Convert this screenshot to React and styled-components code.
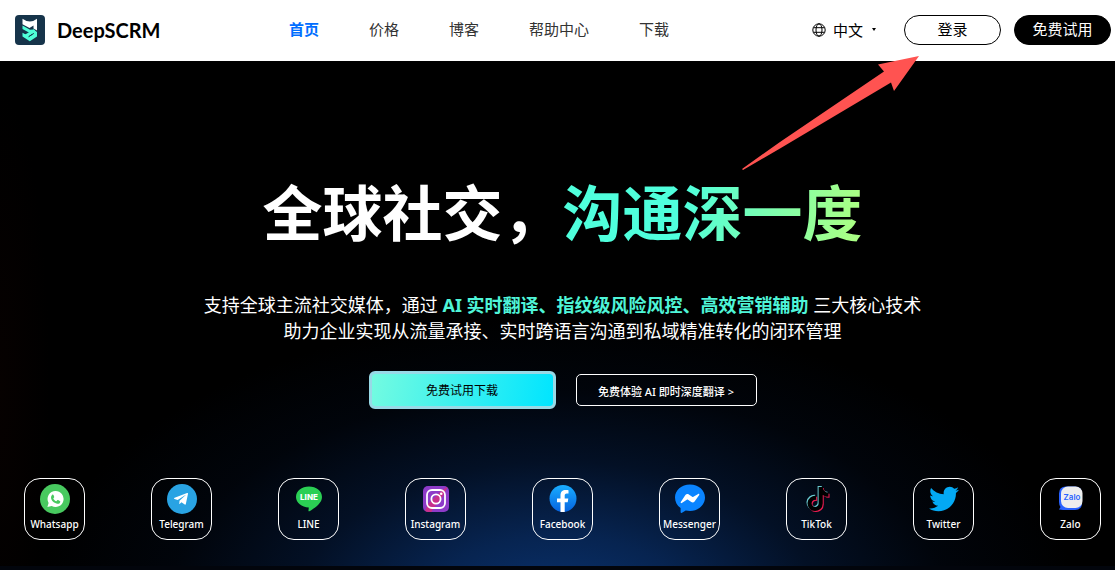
import React from "react";
import styled, { createGlobalStyle } from "styled-components";
import { FaTelegramPlane, FaTwitter, FaTiktok } from "react-icons/fa";

const GlobalStyle = createGlobalStyle`
  * {
    box-sizing: border-box;
  }

  body {
    margin: 0;
    background: #000;
    font-family: "Noto Sans", "Noto Sans CJK SC", sans-serif;
    overflow-x: hidden;
  }

  a {
    color: inherit;
    text-decoration: none;
  }

  button {
    font-family: inherit;
    cursor: pointer;
  }
`;

const Page = styled.div`
  position: relative;
  min-height: 100vh;
  display: flex;
  flex-direction: column;
`;

const Header = styled.header`
  display: flex;
  align-items: center;
  height: 61px;
  padding: 0 4px 2px 15px;
  background: #fff;
  color: #000;
`;

const Brand = styled.a`
  display: flex;
  align-items: center;
  gap: 12px;
  width: 274px;
  font-family: Lato, sans-serif;
  font-size: 20px;
  font-weight: 700;
`;

const Nav = styled.nav`
  display: flex;
  gap: 50px;
  padding-bottom: 2px;
`;

const NavLink = styled.a`
  && {
    color: ${({ $active }) => ($active ? "#006eff" : "#333")};
  }
  font-size: 15px;
  line-height: 24px;
  font-weight: ${({ $active }) => ($active ? 700 : 400)};
`;

const Actions = styled.div`
  display: flex;
  align-items: center;
  margin-left: auto;
`;

const Language = styled.button`
  display: flex;
  align-items: center;
  gap: 7px;
  margin-right: 28px;
  padding: 0;
  border: 0;
  background: none;
  color: #000;
  font-size: 15px;
  line-height: 24px;
`;

const Caret = styled.span`
  margin-left: 2px;
  border: 2px solid transparent;
  border-top: 3px solid #000;
  border-bottom: 0;
`;

const PillButton = styled.button`
  width: 97px;
  height: 30px;
  margin-left: ${({ $solid }) => ($solid ? "13px" : "0")};
  padding: 0 0 2px;
  border: 1px solid #000;
  border-radius: 15px;
  background: ${({ $solid }) => ($solid ? "#000" : "#fff")};
  color: ${({ $solid }) => ($solid ? "#fff" : "#000")};
  font-size: 15px;
  line-height: 24px;
`;

const Hero = styled.main`
  flex: 1;
  display: flex;
  flex-direction: column;
  align-items: center;
  padding: 107px 0 26px 10px;
  border-bottom: 4px solid #02050c;
  background:
    radial-gradient(
      ellipse 520px 290px at 50% 108%,
      #0a3370 0%,
      rgba(8, 42, 94, 0.85) 25%,
      rgba(6, 32, 74, 0.5) 50%,
      rgba(4, 22, 54, 0.2) 75%,
      transparent 100%
    ),
    radial-gradient(ellipse 50px 300px at 0 65%, #060100, transparent),
    #000;
  color: #fff;
`;

const Title = styled.h1`
  margin: 0;
  font-size: 60px;
  line-height: 90px;
  font-weight: 700;
`;

const TitleAccent = styled.span`
  background: linear-gradient(100deg, #4fffdc 40%, #a9ff85 95%);
  background-clip: text;
  color: transparent;
`;

const Lead = styled.p`
  margin: 34px 0 0;
  font-size: 18px;
  line-height: 26px;
  text-align: center;

  strong {
    color: #4ff5d8;
  }
`;

const ButtonRow = styled.div`
  display: flex;
  align-items: center;
  gap: 20px;
  margin-top: 27px;
`;

const DownloadButton = styled.button`
  width: 187px;
  height: 38px;
  padding: 0;
  border: 3px solid #98d9e6;
  border-radius: 6px;
  background:
    linear-gradient(100deg, #74fbe0, #00e5ff) padding-box,
    #98d9e6;
  color: #000;
  font-size: 12px;
`;

const TranslateButton = styled.button`
  width: 181px;
  height: 32px;
  padding: 2px 0 0;
  border: 1px solid #fff;
  border-radius: 5px;
  background: transparent;
  color: #fff;
  font-size: 11px;
  font-weight: 500;
`;

const AppList = styled.ul`
  align-self: stretch;
  display: flex;
  justify-content: space-between;
  margin: auto 0 0;
  padding: 0 14px;
  list-style: none;
`;

const AppCard = styled.a`
  display: flex;
  flex-direction: column;
  align-items: center;
  width: 61px;
  height: 62px;
  padding-top: 4px;
  border: 1px solid #fff;
  border-radius: 16px;
  font-size: 10px;
  font-weight: 500;
  line-height: 18px;
  white-space: nowrap;
`;

const IconSlot = styled.span`
  display: flex;
  align-items: center;
  justify-content: center;
  width: 32px;
  height: 32px;
`;

const TelegramDisc = styled.span`
  display: flex;
  align-items: center;
  justify-content: center;
  width: 30px;
  height: 30px;
  padding-right: 2px;
  border-radius: 50%;
  background: #29a3e3;
  color: #fff;
`;

const Pointer = styled.svg`
  position: absolute;
  top: 56px;
  right: 195px;
  pointer-events: none;
`;

const BrandMark = () => (
  <svg width="30" height="30" viewBox="0 0 30 30" aria-hidden="true">
    <rect width="30" height="30" rx="4" fill="#16344a" />
    <path
      d="M7.500 3.800 11.500 6Q15 6.800 18.200 6L22 3.800V15.500L18.500 13.500V10.500L14.500 13 7.500 9.200Z"
      fill="#fff"
    />
    <path
      d="M7.500 10.500 15 14.800 18.500 14.500 22 17V21.500L14.800 26.200 7.500 21.500V17.800L14.500 21.500 17.500 19.500 7.500 14Z"
      fill="#4fffd8"
    />
    <path d="M8.500 20.500 19 14.200 20.500 16.500 12 22.500Z" fill="#4fffd8" />
    <path d="M7.500 16 11 18.200" stroke="#16344a" strokeWidth="1.200" />
    <path d="M13.500 21.800 18.800 18.400" stroke="#16344a" strokeWidth="1" />
  </svg>
);

const GlobeIcon = () => (
  <svg
    width="14"
    height="14"
    viewBox="0 0 14 14"
    fill="none"
    stroke="#000"
    aria-hidden="true"
  >
    <circle cx="7" cy="7" r="6.200" />
    <ellipse cx="7" cy="7" rx="3" ry="6.200" />
    <path d="M1.500 4.700h11M1.500 9.300h11" />
  </svg>
);

const WhatsappIcon = () => (
  <svg width="32" height="32" viewBox="0 0 32 32" aria-hidden="true">
    <circle cx="16" cy="16" r="15" fill="#48c95f" />
    <path
      d="M16.500 8a8 8 0 1 1-3.800 15L8.400 24l1.200-4A8 8 0 0 1 16.500 8Z"
      fill="#fff"
    />
    <path
      d="M13.200 11.800c.5-.4 1.100-.2 1.300.3l.7 1.700c.1.300 0 .6-.2.800l-.7.800c.7 1.400 1.700 2.300 3.100 2.900l.9-1c.2-.3.500-.3.800-.2l1.700.8c.5.200.6.500.5 1-.3 1.500-1.700 2.200-3.200 1.900-3.300-.8-5.800-3.300-6.100-6 0-1.200.4-2.200 1.200-3Z"
      fill="#48c95f"
    />
  </svg>
);

const LineIcon = () => (
  <svg width="32" height="32" viewBox="0 0 32 32" aria-hidden="true">
    <path
      d="M16 3.500c7.300 0 13 4.600 13 10.500 0 2.800-1.400 5.200-3.300 7.200-2.800 3-7.200 5.900-9.300 7-1 .4-1-.3-.9-1l.3-2.700C8.700 24.200 3 19.700 3 14 3 8.100 8.700 3.500 16 3.500Z"
      fill="#2bcf54"
    />
    <text
      x="16"
      y="17"
      fill="#fff"
      fontFamily="Inter, sans-serif"
      fontSize="8"
      fontWeight="800"
      textAnchor="middle"
    >
      LINE
    </text>
  </svg>
);

const InstagramIcon = () => (
  <svg width="32" height="32" viewBox="0 0 32 32" aria-hidden="true">
    <clipPath id="ig-tile">
      <rect x="3" y="3" width="26" height="26" rx="5" />
    </clipPath>
    <g clipPath="url(#ig-tile)">
      <rect x="3" y="3" width="26" height="26" fill="#8d3bc8" />
      <path d="M4 30 8 21 20 9 28 3 23 13 13 26 11 30Z" fill="#c8308c" />
    </g>
    <g fill="none" stroke="#fff" strokeWidth="1.800">
      <rect x="7" y="7" width="18" height="18" rx="5" />
      <circle cx="16" cy="16" r="4.600" />
    </g>
    <circle cx="21.200" cy="10.800" r="1.300" fill="#fff" />
  </svg>
);

const FacebookIcon = () => (
  <svg width="32" height="32" viewBox="0 0 32 32" aria-hidden="true">
    <linearGradient id="fb-disc" x2="0" y2="1">
      <stop stopColor="#19adff" />
      <stop offset="1" stopColor="#0563e0" />
    </linearGradient>
    <circle cx="16" cy="15.500" r="13.500" fill="url(#fb-disc)" />
    <path
      d="M13.500 29V19.300H10V15.500h3.500v-3c0-3.600 2-5.400 5.300-5.400 1.300 0 2.700.2 2.700.2v3.200h-1.700c-1.600 0-2.100 1-2.100 2v3h3.600l-.6 3.800h-3V29Z"
      fill="#fff"
    />
  </svg>
);

const MessengerIcon = () => (
  <svg width="32" height="32" viewBox="0 0 32 32" aria-hidden="true">
    <path
      d="M16 1.500c8.600 0 15 5.800 15 13S24.600 28 16 28c-1.500 0-3-.2-4.300-.5L8 29.800c-.7.300-1.400-.1-1.400-.9V25C3 22.500 1 18.800 1 14.500c0-7.200 6.400-13 15-13Z"
      fill="#0a84ff"
    />
    <path
      d="M6.800 19 11.400 12.100c.8-1.100 2.300-1.400 3.400-.6l3.400 2.300c.4.300.8.300 1.200 0l4.800-2.900c.7-.4 1.500.3 1 1l-4.600 6.500c-.8 1.100-2.200 1.400-3.300.6L14 16.800c-.4-.3-.8-.3-1.200 0L7.800 20c-.7.500-1.500-.3-1-1Z"
      fill="#fff"
    />
  </svg>
);

const TiktokIcon = () => (
  <svg width="32" height="32" viewBox="0 0 32 32" aria-hidden="true">
    <FaTiktok x="4" y="3" size={24} color="#69c9d0" />
    <FaTiktok x="6" y="5" size={24} color="#ee1d52" />
    <FaTiktok x="5" y="4" size={24} color="#000" />
  </svg>
);

const ZaloIcon = () => (
  <svg width="32" height="32" viewBox="0 0 32 32" aria-hidden="true">
    <path
      d="M11 3.500h9q7 0 7 7V20q0 7-7 7H8l-4-.5 1.500-2.500Q4 22 4 19v-8.500q0-7 7-7Z"
      fill="#2962ff"
    />
    <rect x="6" y="3.500" width="21.500" height="21.500" rx="7" fill="#eee" />
    <text
      x="17"
      y="17"
      fill="#2962ff"
      fontFamily="Inter, sans-serif"
      fontSize="8"
      fontWeight="600"
      textAnchor="middle"
    >
      Zalo
    </text>
  </svg>
);

const apps = [
  { name: "Whatsapp", icon: <WhatsappIcon /> },
  {
    name: "Telegram",
    icon: (
      <TelegramDisc>
        <FaTelegramPlane size={16} />
      </TelegramDisc>
    ),
  },
  { name: "LINE", icon: <LineIcon /> },
  { name: "Instagram", icon: <InstagramIcon /> },
  { name: "Facebook", icon: <FacebookIcon /> },
  { name: "Messenger", icon: <MessengerIcon /> },
  { name: "TikTok", icon: <TiktokIcon /> },
  { name: "Twitter", icon: <FaTwitter size={30} color="#03a9f4" /> },
  { name: "Zalo", icon: <ZaloIcon /> },
];

const App = () => {
  return (
    <Page lang="zh-CN">
      <GlobalStyle />
      <Header>
        <Brand href="#">
          <BrandMark />
          DeepSCRM
        </Brand>
        <Nav>
          <NavLink href="#" $active>
            首页
          </NavLink>
          <NavLink href="#">价格</NavLink>
          <NavLink href="#">博客</NavLink>
          <NavLink href="#">帮助中心</NavLink>
          <NavLink href="#">下载</NavLink>
        </Nav>
        <Actions>
          <Language type="button">
            <GlobeIcon />
            中文
            <Caret />
          </Language>
          <PillButton type="button">登录</PillButton>
          <PillButton type="button" $solid>
            免费试用
          </PillButton>
        </Actions>
      </Header>

      <Hero>
        <Title>
          全球社交，<TitleAccent>沟通深一度</TitleAccent>
        </Title>
        <Lead>
          支持全球主流社交媒体，通过{" "}
          <strong>AI 实时翻译、指纹级风险风控、高效营销辅助</strong>{" "}
          三大核心技术
          <br />
          助力企业实现从流量承接、实时跨语言沟通到私域精准转化的闭环管理
        </Lead>
        <ButtonRow>
          <DownloadButton type="button">免费试用下载</DownloadButton>
          <TranslateButton type="button">
            免费体验 AI 即时深度翻译 &gt;
          </TranslateButton>
        </ButtonRow>

        {/* Supported platforms */}
        <AppList>
          {apps.map((app) => (
            <li key={app.name}>
              <AppCard href="#">
                <IconSlot>{app.icon}</IconSlot>
                {app.name}
              </AppCard>
            </li>
          ))}
        </AppList>
      </Hero>

      {/* Arrow pointing at the login button */}
      <Pointer width="180" height="116" viewBox="0 0 180 116" aria-hidden="true">
        <path
          d="M179 0 138 8.500 144 15.500 40 86 2 113 3 114 40 92.500 151 26.500 154 35Z"
          fill="#ff5351"
        />
      </Pointer>
    </Page>
  );
};

export default App;
